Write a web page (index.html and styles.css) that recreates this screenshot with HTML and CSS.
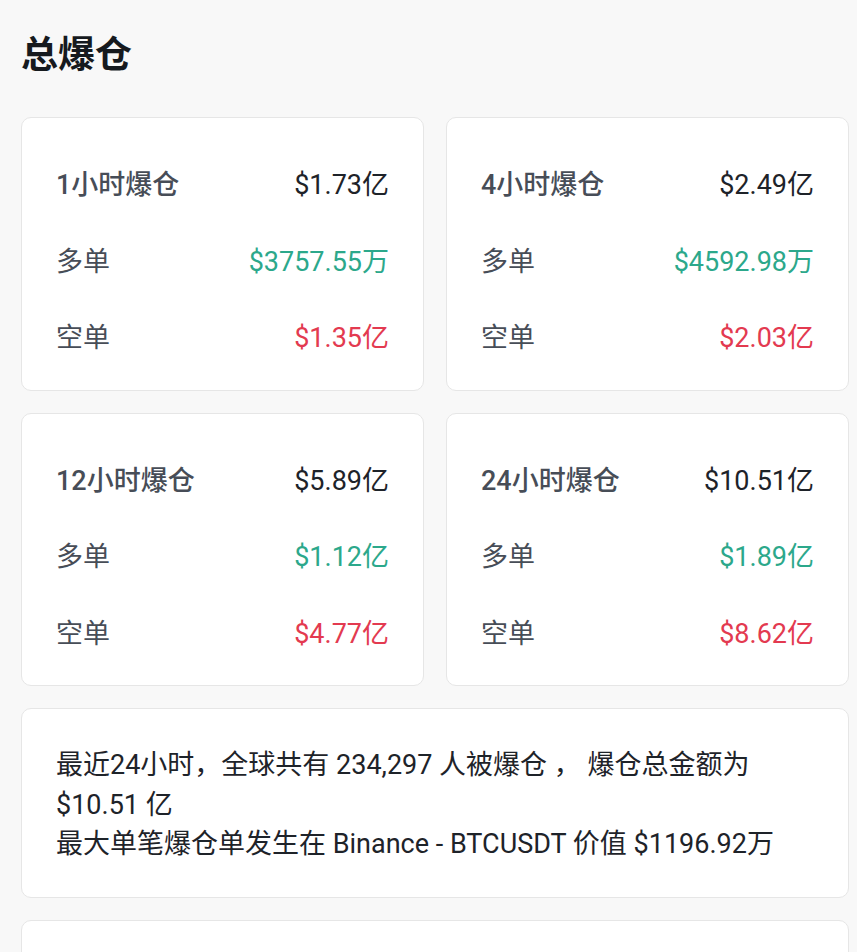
FILE: index.html
```html
<!DOCTYPE html>
<html lang="zh">
<head>
<meta charset="utf-8">
<link rel="stylesheet" href="styles.css">
</head>
<body>
<div class="page">
  <h1 class="title">总爆仓</h1>
  <div class="grid">
    <div class="card">
      <div class="row"><span class="head">1小时爆仓</span><span class="total">$1.73亿</span></div>
      <div class="row"><span class="label">多单</span><span class="up">$3757.55万</span></div>
      <div class="row"><span class="label">空单</span><span class="down">$1.35亿</span></div>
    </div>
    <div class="card">
      <div class="row"><span class="head">4小时爆仓</span><span class="total">$2.49亿</span></div>
      <div class="row"><span class="label">多单</span><span class="up">$4592.98万</span></div>
      <div class="row"><span class="label">空单</span><span class="down">$2.03亿</span></div>
    </div>
    <div class="card">
      <div class="row"><span class="head">12小时爆仓</span><span class="total">$5.89亿</span></div>
      <div class="row"><span class="label">多单</span><span class="up">$1.12亿</span></div>
      <div class="row"><span class="label">空单</span><span class="down">$4.77亿</span></div>
    </div>
    <div class="card">
      <div class="row"><span class="head">24小时爆仓</span><span class="total">$10.51亿</span></div>
      <div class="row"><span class="label">多单</span><span class="up">$1.89亿</span></div>
      <div class="row"><span class="label">空单</span><span class="down">$8.62亿</span></div>
    </div>
  </div>
  <div class="summary">
    <p>最近24小时，全球共有 234,297 人被爆仓 ， 爆仓总金额为 $10.51 亿</p>
    <p>最大单笔爆仓单发生在 Binance - BTCUSDT 价值 $1196.92万</p>
  </div>
  <div class="next"></div>
</div>
</body>
</html>
```

FILE: styles.css
```css
html, body {
  margin: 0;
  padding: 0;
  background: #f8f8f8;
}
body {
  font-family: Roboto, "Noto Sans CJK SC", sans-serif;
  color: #1e2329;
  overflow: hidden;
  height: 952px;
}
.page {
  padding: 28px 8px 0 21px;
}
.title {
  margin: 0 0 41px 0;
  font-family: "Noto Sans CJK SC", sans-serif;
  font-size: 37px;
  line-height: 48px;
  font-weight: 700;
  color: #161a1e;
}
.grid {
  display: grid;
  grid-template-columns: 1fr 1fr;
  gap: 22px;
}
.card {
  background: #fff;
  border: 1.5px solid #e6e6e6;
  border-radius: 10px;
  padding: 29px 34px 13px 34px;
}
.row {
  height: 76.5px;
  display: flex;
  align-items: center;
  justify-content: space-between;
  font-size: 27px;
  line-height: 36px;
}
.head {
  color: #474d57;
  font-weight: 500;
}
.label {
  color: #474d57;
}
.total {
  color: #1e2329;
}
.up {
  color: #2ca88b;
}
.down {
  color: #e33a50;
}
.summary {
  margin-top: 22px;
  background: #fff;
  border: 1.5px solid #e6e6e6;
  border-radius: 10px;
  padding: 37px 34px 32px 34px;
  font-size: 27px;
  line-height: 39.5px;
  color: #1e2329;
}
.summary p {
  margin: 0;
}
.next {
  margin-top: 22px;
  background: #fff;
  border: 1.5px solid #e6e6e6;
  border-radius: 10px;
  height: 100px;
}
```
